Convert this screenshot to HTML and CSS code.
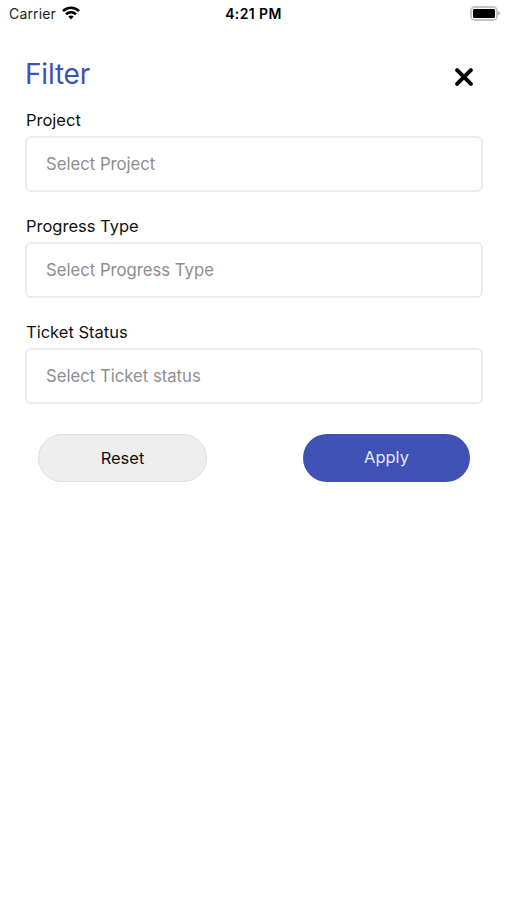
FILE: index.html
```html
<!DOCTYPE html>
<html lang="en">
<head>
<meta charset="utf-8">
<title>Filter</title>
<link rel="stylesheet" href="styles.css">
</head>
<body>
<header class="status-bar">
  <div class="carrier"><span>Carrier</span>
    <svg class="wifi" viewBox="0 0 18 14" width="18" height="14" fill="none" stroke="#000" stroke-width="2.6"><path d="M1 5.1C5.4.7 12.600.7 17 5.100"/><path d="M4 8.200C6.800 5.500 11.200 5.500 14 8.200"/><path d="M6.300 10.600Q9 8.200 11.700 10.600L9 13.400Z" fill="#000" stroke="none"/></svg>
  </div>
  <time class="clock">4:21 PM</time>
  <svg class="battery" viewBox="0 0 30 15" width="30" height="15"><rect x="1" y="1" width="26" height="13" rx="3.600" fill="#fff" stroke="#c4c4c4" stroke-width="1.800"/><rect x="3" y="3" width="22" height="9" rx="1.200" fill="#000"/><path d="M28.300 5.300Q30 6 30 7.300T28.300 9.300Z" fill="#aaa"/></svg>
</header>
<main class="filter">
  <div class="heading">
    <h1>Filter</h1>
    <button class="close" type="button" aria-label="Close"><svg viewBox="0 0 20 20" width="20" height="20" stroke="#000" stroke-width="4" stroke-linecap="round"><path d="M3.100 3.100L16.900 16.900M16.900 3.100L3.100 16.900"/></svg></button>
  </div>
  <section class="field"><div class="label">Project</div><div class="select">Select Project</div></section>
  <section class="field"><div class="label">Progress Type</div><div class="select">Select Progress Type</div></section>
  <section class="field"><div class="label">Ticket Status</div><div class="select">Select Ticket status</div></section>
  <div class="actions">
    <button class="reset" type="button">Reset</button>
    <button class="apply" type="button">Apply</button>
  </div>
</main>
</body>
</html>
```
FILE: styles.css
```css
* { box-sizing: border-box; }
body { margin: 0; min-height: 900px; background: #fff; color: #111; font-family: Inter, "Liberation Sans", sans-serif; }
button { margin: 0; padding: 0; border: 0; background: none; font: inherit; }
svg { display: block; }
.status-bar { display: grid; grid-template-columns: 1fr auto 1fr; height: 28px; padding: 0 7px; align-items: center; }
.carrier { display: flex; align-items: center; gap: 6px; padding-left: 2px; font-size: 14px; line-height: 16px; letter-spacing: .15px; color: #222; }
.wifi { margin-top: -2px; }
.clock { font-size: 14px; font-weight: 600; line-height: 28px; letter-spacing: .4px; color: #000; }
.battery { justify-self: end; margin-top: -2px; }
.filter { padding: 29px 24px 0 25px; }
.heading { display: flex; justify-content: space-between; height: 52px; padding-right: 9px; }
h1 { margin: 0; font-size: 28px; font-weight: 400; line-height: 34px; letter-spacing: -.2px; color: #3f51b5; }
.close { width: 20px; height: 20px; margin-top: 10px; }
.field { height: 106.200px; padding-top: 1px; }
.label { height: 26px; padding-left: 1px; font-size: 16.500px; line-height: 20px; }
.select { height: 56px; padding-left: 19px; border: 2px solid #ebebeb; border-radius: 6px; font-size: 16.700px; line-height: 53px; color: #8e8e8e; }
.actions { display: flex; justify-content: space-between; padding: 6.400px 13px 0 13px; }
.actions button { height: 48px; border-radius: 24px; font-size: 16.500px; }
.actions .reset { width: 169px; border: 1px solid #dedede; background: #eee; color: #111; }
.actions .apply { width: 167px; background: #3f51b5; color: #e8eaf6; padding-bottom: 2px; }
```
